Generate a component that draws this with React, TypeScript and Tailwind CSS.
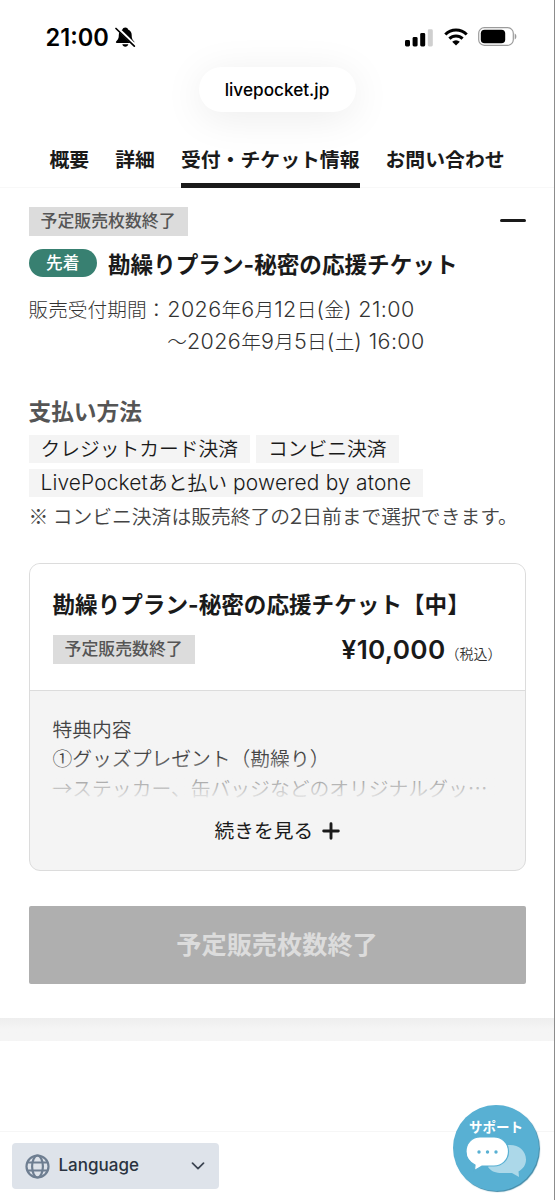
import React from "react";
import clsx from "clsx";

const tabs = [
  { label: "概要", active: false },
  { label: "詳細", active: false },
  { label: "受付・チケット情報", active: true },
  { label: "お問い合わせ", active: false },
];

const StatusBar = () => (
  <div className="flex h-[67px] items-start justify-between pt-[25px] pr-[37px] pl-[45.5px]">
    <div className="flex h-[25px] items-center gap-[6.5px]">
      <span className="text-[23.6px] leading-[25px] font-semibold">21:00</span>
      <svg className="-mt-[2px] h-[22px] w-[21px]" viewBox="0 0 21 22">
        <path
          d="M10.3 1.5c-1.5 0-2.6.9-2.8 2.1C5 4.5 3.8 6.6 3.8 9c0 4-1.2 4.8-2.5 6.3-.8.9-.4 1.7.6 1.7h16.5c1 0 1.4-.8.6-1.700C17.700 13.800 16.700 13 16.700 9c0-2.400-1.200-4.500-3.600-5.400-.2-1.200-1.300-2.100-2.800-2.100zM7.300 18.300h6c-.3 1.500-1.500 2.400-3 2.400s-2.700-.9-3-2.400z"
          fill="black"
        />
        <path d="M1.600 1.500L20.400 19.700" stroke="white" strokeWidth="3.200" />
        <path
          d="M1 2.500L19.300 20.200"
          stroke="black"
          strokeWidth="1.700"
          strokeLinecap="round"
        />
      </svg>
    </div>
    <div className="flex h-[25px] items-center">
      <svg className="h-[18px] w-[28px]" viewBox="0 0 28 18">
        <rect x="0" y="11" width="5" height="6.500" rx="1.400" />
        <rect x="7.600" y="8" width="5" height="9.500" rx="1.400" />
        <rect x="15.200" y="4" width="5" height="13.500" rx="1.400" />
        <rect x="22.800" y="0.300" width="5" height="17.200" rx="1.400" fill="#cfcfcf" />
      </svg>
      <svg className="-mt-px ml-[11px] h-[18px] w-[24px]" viewBox="0 0 24 18">
        <g fill="none" stroke="black" strokeWidth="3">
          <path d="M1.300 6.500a15.200 15.200 0 0 1 21.400 0" />
          <path d="M5.400 10.600a9.400 9.400 0 0 1 13.200 0" />
        </g>
        <path d="M12 17.600l-3.800-3.900a5.400 5.400 0 0 1 7.600 0z" />
      </svg>
      <svg className="-mt-[2px] ml-[10.5px] h-[19px] w-[39px]" viewBox="0 0 39 19">
        <rect
          x="0.700"
          y="0.700"
          width="34.600"
          height="17.600"
          rx="5.600"
          fill="none"
          stroke="#9b9b9b"
          strokeWidth="1.200"
        />
        <rect x="2.800" y="2.800" width="24.400" height="13.400" rx="3.800" />
        <path d="M36.700 6.500c2.200.9 2.200 5.100 0 6z" fill="#9b9b9b" />
      </svg>
    </div>
  </div>
);

const Status = ({ children }: { children: React.ReactNode }) => (
  <span className="flex h-[28.5px] w-fit items-center bg-[#dcdcdc] px-[12px] text-[16.9px] leading-none font-medium text-[#555]">
    {children}
  </span>
);

const Chip = ({ children }: { children: React.ReactNode }) => (
  <span className="flex h-[28px] items-center bg-[#f4f4f4] px-[12px] pt-[2px] text-[19.75px] leading-none font-[350] whitespace-pre text-[#1a1a1a]">
    {children}
  </span>
);

// latin digits run larger than the kanji around them
const Num = ({ children }: { children: React.ReactNode }) => (
  <span className="text-[21.5px] leading-none tracking-[0.4px]">{children}</span>
);

const TicketCard = () => (
  <div className="mt-[33px] h-[308px] overflow-hidden rounded-[11px] border-[1.5px] border-[#dcdcdc] bg-[#f4f4f4]">
    <div className="h-[127px] border-b border-[#dcdcdc] bg-white px-[23px] pt-[27px]">
      <h3 className="h-[28px] text-[22.6px] leading-[28px] font-bold whitespace-nowrap">
        勘繰りプラン-秘密の応援チケット【中】
      </h3>
      <div className="mt-[17px] flex h-[28px] items-center justify-between">
        <Status>予定販売数終了</Status>
        <p className="flex items-baseline">
          <span className="text-[26.2px] leading-[28px] font-semibold tracking-[0.3px]">
            ¥10,000
          </span>
          <span className="text-[14px] leading-none font-[350] text-[#333]">（税込）</span>
        </p>
      </div>
    </div>
    <div className="px-[23px] pt-[23px]">
      <div className="relative font-['Noto_Sans_CJK_JP',sans-serif] text-[19.8px] leading-[29.5px] font-[350] whitespace-nowrap text-[#444]">
        <p>特典内容</p>
        <p>①グッズプレゼント（勘繰り）</p>
        <p>→ステッカー、缶バッジなどのオリジナルグッ…</p>
        <div className="absolute inset-x-0 bottom-0 h-[44px] bg-linear-to-b from-[#f4f4f4]/10 to-[#f4f4f4]" />
      </div>
      <div className="mt-[16px] flex h-[28px] items-center justify-center gap-[9px] pl-px text-[19.75px] leading-none">
        続きを見る
        <svg className="-mt-[2px] size-[18px]" viewBox="0 0 18 18">
          <path
            d="M9 1.700v14.600M1.700 9h14.600"
            stroke="#1a1a1a"
            strokeWidth="2.900"
            strokeLinecap="round"
          />
        </svg>
      </div>
    </div>
  </div>
);

const SupportButton = () => (
  <div className="absolute right-[15px] bottom-[9px] flex size-[86px] flex-col items-center rounded-full bg-[#58b0d3] shadow-[1px_1px_1px_#3f88a6]">
    <span className="mt-[13px] text-[13.5px] leading-[18px] font-bold whitespace-nowrap text-white">
      サポート
    </span>
    <svg className="h-[42px] w-[62px]" viewBox="0 0 62 42">
      <path
        d="M37 9h8c9 0 16 6 16 14.500 0 5.500-3 9.500-7.500 12L54 41l-7-4H37c-6 0-11-1.500-14-6z"
        fill="#acd8e9"
      />
      <path
        d="M15 1h14c8 0 14.500 6 14.500 14.500S37 30 29 30H17L9.500 34.500 10 29C5 26.500 1 21.500 1 15.500 1 7 7 1 15 1z"
        fill="white"
        stroke="#58b0d3"
        strokeWidth="1.200"
      />
      <g fill="#58b0d3">
        <circle cx="14" cy="16" r="1.700" />
        <circle cx="22.500" cy="16" r="1.700" />
        <circle cx="31" cy="16" r="1.700" />
      </g>
    </svg>
  </div>
);

export default function App() {
  return (
    <div className="relative flex h-[1200px] w-[555px] flex-col overflow-hidden border-r border-[#8c8c8c] bg-white font-['Inter','Noto_Sans_CJK_JP',sans-serif] text-[#1a1a1a]">
      <header className="h-[188px] shrink-0 border-b border-[#f8f8f8] text-black">
        <StatusBar />
        <div className="mx-auto flex h-[45px] w-[157px] items-center justify-center rounded-full bg-white pt-px text-[17.2px] font-medium shadow-[0_6px_40px_rgba(0,0,0,0.08)]">
          livepocket.jp
        </div>
        <nav className="flex gap-[26px] pt-[34px] pl-[49.5px] text-[19.85px] font-semibold text-[#1a1a1a]">
          {tabs.map((tab) => (
            <span
              key={tab.label}
              className={clsx(
                "h-[42px] pt-px leading-[26px] whitespace-nowrap",
                tab.active && "border-b-[5.5px] border-[#1a1a1a]",
              )}
            >
              {tab.label}
            </span>
          ))}
        </nav>
      </header>

      <main className="h-[830px] shrink-0 px-[28.5px] pt-[19px]">
        <div className="flex items-start justify-between">
          <Status>予定販売枚数終了</Status>
          <span className="mt-[12px] h-[3px] w-[26px] rounded-full bg-[#1a1a1a]" />
        </div>
        <div className="mt-[13px] flex h-[29px] items-center gap-[11px]">
          <span className="flex h-[28px] w-[68.5px] items-center justify-center rounded-full bg-[#388071] text-[16.7px] leading-none font-medium text-white">
            先着
          </span>
          <h2 className="pt-[3px] text-[22.6px] leading-[28px] font-bold whitespace-nowrap">
            勘繰りプラン-秘密の応援チケット
          </h2>
        </div>

        <div className="mt-[16px] flex text-[19.7px] leading-[32.5px] font-light whitespace-nowrap text-[#333]">
          <span className="pr-px">販売受付期間：</span>
          <div>
            <p className="h-[32.5px]">
              <Num>2026</Num>年<Num>6</Num>月<Num>12</Num>日<Num>(</Num>金
              <Num>) 21:00</Num>
            </p>
            <p className="h-[32.5px]">
              〜<Num>2026</Num>年<Num>9</Num>月<Num>5</Num>日<Num>(</Num>土
              <Num>) 16:00</Num>
            </p>
          </div>
        </div>

        <h3 className="mt-[38px] text-[22.7px] leading-[30px] font-bold text-[#555]">
          支払い方法
        </h3>
        <div className="mt-[8px] flex flex-wrap gap-[6px]">
          <Chip>クレジットカード決済</Chip>
          <Chip>コンビニ決済</Chip>
          <Chip>
            <span className="text-[20.9px] tracking-[0.15px]">LivePocket</span>あと払い
            <span className="text-[20.9px] tracking-[0.2px]"> powered by atone</span>
          </Chip>
        </div>
        <p className="mt-[5px] h-[28px] font-['Noto_Sans_CJK_JP',sans-serif] text-[19.8px] leading-[27px] font-[350] whitespace-nowrap text-[#444]">
          ※ コンビニ決済は販売終了の
          <span className="text-[22px] leading-none">2</span>
          日前まで選択できます。
        </p>

        <TicketCard />

        <div className="mt-[35px] flex h-[78px] items-center justify-center rounded-[2px] bg-[#afafaf] pt-[2px] text-[25.2px] leading-none font-bold text-[#dcdcdc]">
          予定販売枚数終了
        </div>
      </main>

      <div className="h-[23px] shrink-0 bg-linear-to-b from-[#eee] to-[#f5f5f5] to-50%" />
      <div className="h-[90px] shrink-0" />
      <footer className="border-t border-[#f6f6f6] pt-[11px] pl-[11.5px]">
        <div className="flex h-[46px] w-[207.5px] items-center rounded-[4px] bg-[#dee3ea] pr-[14px] pl-[13px] text-[#2a3340]">
          <svg
            className="size-[25px]"
            viewBox="0 0 25 25"
            fill="none"
            stroke="#6e7e91"
            strokeWidth="2.200"
          >
            <circle cx="12.500" cy="12.500" r="11" />
            <ellipse cx="12.500" cy="12.500" rx="5.400" ry="11" />
            <path d="M2.500 8.500h20M2.500 16.500h20" />
          </svg>
          <span className="ml-[9px] flex-1 text-[17px] font-medium">Language</span>
          <svg
            className="h-[8px] w-[14px]"
            viewBox="0 0 14 8"
            fill="none"
            stroke="#3c4552"
            strokeWidth="1.700"
            strokeLinecap="round"
            strokeLinejoin="round"
          >
            <path d="M1.500 1.200L7 6.700 12.500 1.200" />
          </svg>
        </div>
      </footer>
      <SupportButton />
    </div>
  );
}
